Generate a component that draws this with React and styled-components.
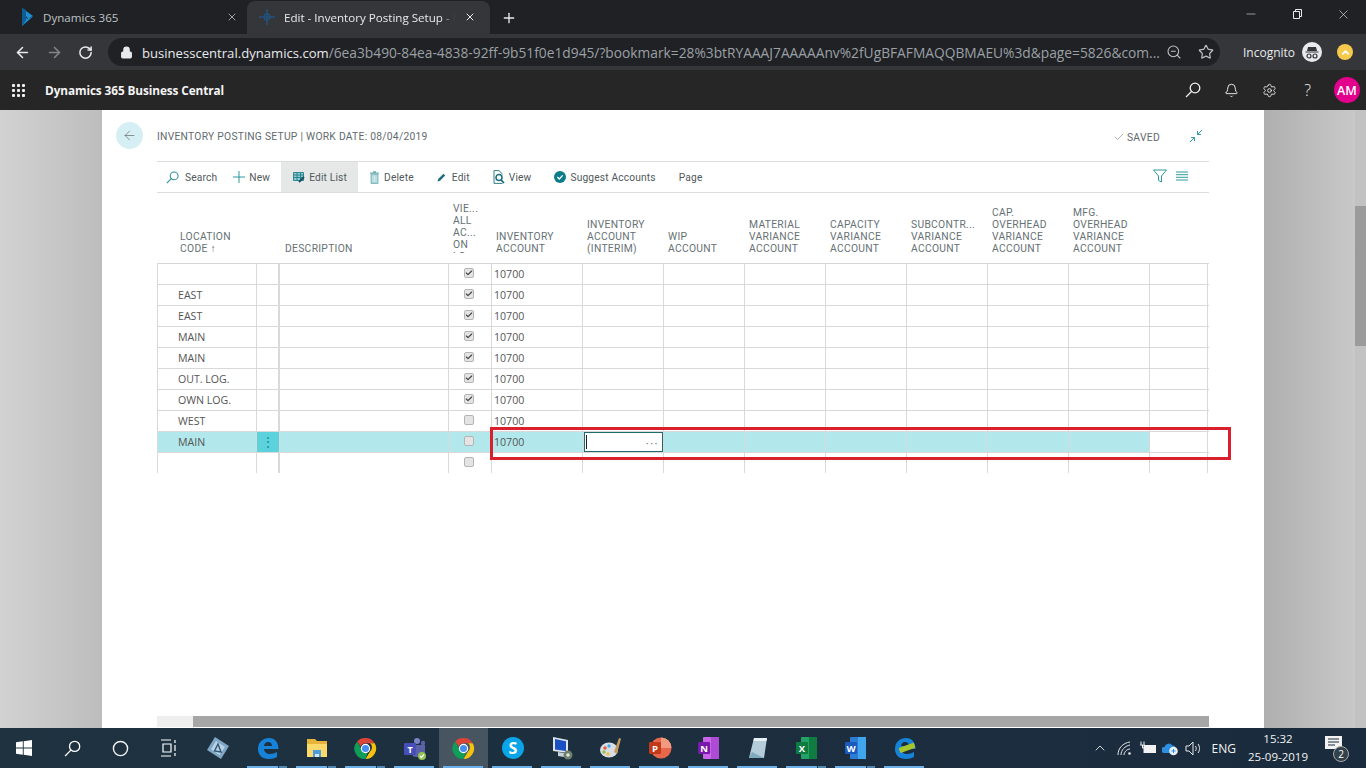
import React from 'react';
import styled, { createGlobalStyle } from 'styled-components';
import { ArrowLeft, ArrowRight, RotateCw, Lock, Star, ZoomOut, Bell, Settings, Plus, X, Minus, Check, ChevronUp, Circle } from 'lucide-react';

const Global = createGlobalStyle`
  html, body { margin: 0; padding: 0; width: 1366px; height: 768px; overflow: hidden; background: #fff; }
  * { box-sizing: border-box; }
  #root { width: 1366px; height: 768px; }
`;

const Screen = styled.div`
  width: 1366px; height: 768px; display: flex; flex-direction: column; overflow: hidden;
  font-family: "Open Sans", sans-serif;
`;

/* browser chrome */
const TabBar = styled.div`
  height: 34px; background: #202124; display: flex; align-items: flex-end; flex: none;
`;
const Tab = styled.div`
  width: ${p => p.$w}px; height: 33px; display: flex; align-items: center; padding: 0 ${p => p.$pr}px 1px ${p => p.$pl}px;
  background: ${p => p.$active ? '#35363a' : 'transparent'};
  border-radius: 8px 8px 0 0; color: ${p => p.$active ? '#e8eaed' : '#bdc1c6'};
  font-size: 11.6px; gap: 9px; flex: none;
`;
const TabText = styled.span`
  flex: 1; white-space: nowrap; overflow: hidden; min-width: 0;
  ${p => p.$fade ? 'mask-image: linear-gradient(90deg, #000 92%, transparent);' : ''}
`;
const NewTab = styled.div`
  margin-left: 11px; height: 33px; display: flex; align-items: center; color: #e8eaed;
`;
const WindowControls = styled.div`
  margin-left: auto; height: 34px; display: flex; align-items: flex-start; padding-top: 7px; color: #e8eaed; padding-right: 15px; gap: 32px;
`;
const AddressBar = styled.div`
  height: 36px; background: #35363a; display: flex; align-items: center; flex: none; padding-left: 14px; color: #e8eaed;
`;
const NavIcons = styled.div`
  display: flex; align-items: center; gap: 15px; width: 94px; flex: none;
`;
const Omnibox = styled.div`
  width: 1112px; height: 28px; border-radius: 14px; background: #202124; display: flex; align-items: center;
  padding: 0 6px 0 12px; gap: 9px; flex: none;
`;
const Url = styled.div`
  flex: none; width: 1022px; margin-right: -9px; font-size: 13.77px; white-space: nowrap; color: #9aa0a6; overflow: hidden;
  strong { font-weight: 400; color: #e8eaed; font-size: 13.1px; }
`;
const OmniIcons = styled.div`
  margin-left: auto; display: flex; align-items: center; gap: 16px; color: #bdc1c6;
`;
const Profile = styled.div`
  margin-left: 23px; display: flex; align-items: center; gap: 7px; font-size: 12px; color: #e8eaed;
`;
const Dot = styled.div`
  width: 16px; height: 16px; border-radius: 50%; background: #f6c84c; margin-left: 15px; display: flex; align-items: center; justify-content: center; color: #fff;
`;

/* app bar */
const AppBar = styled.div`
  height: 40px; background: #262626; display: flex; align-items: center; padding-left: 12px; flex: none; color: #fff;
`;
const Waffle = styled.div`
  display: grid; grid-template-columns: repeat(3, 3px); gap: 2px; margin-right: 20px;
`;
const WaffleDot = styled.span`
  width: 3px; height: 3px; background: #f0f0f0; border-radius: 1px;
`;
const AppTitle = styled.div`
  font-weight: 700; font-size: 11.8px; color: #f4f4f4; letter-spacing: -.1px;
`;
const AppActions = styled.div`
  margin-left: auto; display: flex; align-items: center; gap: 23px; padding-right: 6px; color: #f0f0f0;
`;
const Help = styled.span`
  font-size: 16px; width: 15px; text-align: center; font-weight: 300;
`;
const Avatar = styled.div`
  width: 26px; height: 26px; border-radius: 50%; background: #e3008c; color: #fff; font-size: 12.5px; font-weight: 600;
  display: flex; align-items: center; justify-content: center; margin-left: -4px;
`;

/* page area */
const Stage = styled.div`
  flex: 1; min-height: 0; display: flex;
`;
const LeftShade = styled.div`
  width: 102px; flex: none; background: linear-gradient(90deg, #d2d2d2, #bdbdbd);
`;
const RightShade = styled.div`
  width: 91px; flex: none; background: linear-gradient(90deg, #afafaf, #c8c8c8);
`;
const PageScroll = styled.div`
  width: 11px; flex: none; background: #c2c2c2; padding-top: 96px;
`;
const PageThumb = styled.div`
  height: 140px; background: #9b9b9b;
`;
const Panel = styled.div`
  width: 1162px; flex: none; background: #fff; display: flex; flex-direction: column; position: relative;
`;
const PageHead = styled.div`
  height: 51px; display: flex; align-items: center; padding: 0 61px 0 14px; flex: none;
`;
const BackButton = styled.div`
  width: 27px; height: 27px; border-radius: 50%; background: #d6eff4; color: #4d5b60; display: flex; align-items: center; justify-content: center; margin-right: 14px;
`;
const PageTitle = styled.div`
  font-family: Roboto, sans-serif; font-size: 10.3px; color: #5f6a6e; letter-spacing: .26px; white-space: nowrap; margin-top: 2px;
`;
const Saved = styled.div`
  margin-left: auto; display: flex; align-items: center; gap: 2px; font-family: Roboto, sans-serif; font-size: 10.3px; letter-spacing: .3px; color: #5f6a6e; margin-right: 29px; margin-top: 3px;
`;
const Teal = styled.span`
  color: #2f9aa0; display: inline-flex;
`;
const Body = styled.div`
  margin-left: 55px; width: 1052px; display: flex; flex-direction: column;
`;
const Toolbar = styled.div`
  height: 32px; border-top: 1px solid #dcdcdc; border-bottom: 1px solid #dcdcdc; display: flex; align-items: stretch;
  font-family: Roboto, sans-serif; font-size: 10.2px; letter-spacing: .17px; color: #50595c; flex: none;
`;
const ToolButton = styled.div`
  display: flex; align-items: center; gap: ${p => p.$gap ?? 4}px; padding: 0 ${p => p.$pr ?? 11}px 0 ${p => p.$pl ?? 12}px;
  background: ${p => p.$active ? '#e6e8e8' : 'transparent'}; white-space: nowrap;
`;
const ToolRight = styled.div`
  margin-left: auto; display: flex; align-items: center; gap: 9px; padding-right: 21px; padding-bottom: 3px;
`;
const gridCols = '100px 23px 169px 43px 91px repeat(7, 81px) 58px';
const HeaderRow = styled.div`
  height: 71px; display: grid; grid-template-columns: ${gridCols}; flex: none;
  border-bottom: 1px solid #d6d6d6;
`;
const HeaderCell = styled.div`
  display: flex; align-items: flex-end; padding: 0 0 8px ${p => p.$pl ?? 4}px; overflow: hidden;
`;
const HeaderLabel = styled.div`
  font-family: Roboto, sans-serif; font-size: 10.3px; line-height: 12px; letter-spacing: .3px; color: #667175; white-space: nowrap;
  ${p => p.$clip ? 'align-self: flex-start; margin-top: 10px; height: 50px; overflow: hidden;' : ''}
`;
const Row = styled.div`
  height: 21px; display: grid; grid-template-columns: ${gridCols}; flex: none;
  border-bottom: 1px solid ${p => p.$last ? 'transparent' : '#d9d9d9'};
`;
const Cell = styled.div`
  border-right: ${p => p.$thick ? 2 : 1}px solid #d9d9d9;
  ${p => p.$first ? 'border-left: 1px solid #d9d9d9;' : ''}
  background: ${p => p.$bg || 'transparent'};
  padding-left: ${p => p.$pl ?? 0}px; padding-right: ${p => p.$pr ?? 0}px; display: flex; align-items: center; justify-content: ${p => p.$center ? 'center' : 'flex-start'};
  font-size: 10.6px; color: #555; white-space: nowrap; min-width: 0;
`;
const Box = styled.div`
  width: 10px; height: 10px; border-radius: 2px; background: #e4e4e4; border: 1px solid #b4b4b4; display: flex; align-items: center; justify-content: center; color: #444; margin-bottom: 2px;
`;
const Kebab = styled.span`
  color: #1f8f99; font-size: 14px; line-height: 1;
`;
const Editor = styled.div`
  width: 79px; height: 20px; margin-left: 1px; background: #fff; border: 1px solid #1f6a70; display: flex; align-items: center; justify-content: space-between; padding: 0 3px 0 1px; color: #777; letter-spacing: 1.5px; font-size: 11px;
`;
const Caret = styled.span`
  width: 1px; height: 14px; background: #222;
`;
const Callout = styled.div`
  position: absolute; left: 388px; top: 317px; width: 741px; height: 33px; border: 3px solid #d9202c; pointer-events: none;
`;
const HScroll = styled.div`
  position: absolute; left: 55px; top: 606px; width: 1052px; height: 11px; background: #eeeeee; padding-left: 36px;
`;
const HThumb = styled.div`
  height: 11px; background: #a6a6a6;
`;

/* taskbar */
const Taskbar = styled.div`
  height: 40px; background: linear-gradient(90deg, #1e3240, #1a2b3d); display: flex; align-items: stretch; flex: none; color: #f2f2f2;
`;
const Slot = styled.div`
  width: ${p => p.$w ?? 49}px; flex: none; display: flex; align-items: center; justify-content: center; position: relative;
  background: ${p => p.$active ? '#46555f' : 'transparent'};
  ${p => p.$run ? `&::after { content: ''; position: absolute; left: 4px; right: 5px; bottom: 0; height: 2px;
    background: ${p.$stack ? 'linear-gradient(90deg, #6cb0ea 31px, transparent 31px, transparent 32px, #4f87b5 32px)' : '#6cb0ea'}; }` : ''}
`;
const Tray = styled.div`
  margin-left: auto; display: flex; align-items: center; padding-right: 24px; font-size: 12px;
`;
const TrayIcon = styled.div`
  width: ${p => p.$w}px; display: flex; justify-content: center;
`;
const Lang = styled.span`
  margin-left: 7px;
`;
const Clock = styled.div`
  width: 60px; text-align: center; line-height: 18px; font-size: 11.5px; margin-left: 12px; margin-right: 17px; white-space: nowrap;
`;
const Notify = styled.div`
  position: relative; width: 17px; height: 16px; margin-bottom: 8px; color: #f2f2f2;
`;
const NotifyBadge = styled.div`
  position: absolute; right: -7px; bottom: -10px; width: 16px; height: 16px; border-radius: 50%; background: #33414b; border: 1px solid #aaa;
  font-size: 10px; display: flex; align-items: center; justify-content: center; color: #fff;
`;

const ChromeLogo = ({ s = 22 }) => (
  <svg width={s} height={s} viewBox="0 0 24 24">
    <path d="M12 1a11 11 0 0 1 9.600 5.500H12a5.500 5.500 0 0 0-5.100 3.300L3.300 4.600A11 11 0 0 1 12 1z" fill="#dc4437" />
    <path d="M21.600 6.500A11 11 0 0 1 12 23l4.700-8a5.500 5.500 0 0 0 .1-8.500z" fill="#f4c20d" />
    <path d="M12 23A11 11 0 0 1 3.300 4.600l4.600 8.200a5.500 5.500 0 0 0 6.300 3.700z" fill="#0f9d58" />
    <circle cx="12" cy="12" r="4.300" fill="#4a8df0" stroke="#fff" strokeWidth="1.200" />
  </svg>
);
const EdgeLogo = ({ dev }) => (
  <svg width="24" height="24" viewBox="0 0 24 24">
    <path d="M2 13C2 6 7 2 13 2c6 0 9.500 4.500 9.500 11H8c.3 3.500 3 5 6 5 2.500 0 5-.8 7-2v5c-2 1.200-5 2-8 2-7 0-11-4-11-10zm6-3h8c0-2.500-1.500-4-4-4s-3.700 1.800-4 4z" fill="#1683d8" />
    {dev && <rect x="6" y="9.500" width="16" height="5.500" rx="1" transform="rotate(-20 13 12)" fill="#a8c62c" />}
  </svg>
);
const Folder = () => (
  <svg width="24" height="24" viewBox="0 0 24 24">
    <path d="M2 3h8l2 2h10v16H2z" fill="#e8b33a" /><path d="M2 8h20v13H2z" fill="#fbd96b" />
    <path d="M8 14h8v7H8z" fill="#4f9ad8" /><path d="M10 18h4v3h-4z" fill="#d9e7f2" />
  </svg>
);
const Teams = () => (
  <svg width="24" height="24" viewBox="0 0 24 24">
    <circle cx="14" cy="5" r="3" fill="#7b83c9" /><circle cx="20" cy="7" r="2.200" fill="#5b62a8" />
    <path d="M9 9h13v8a4 4 0 0 1-4 4h-5a4 4 0 0 1-4-4z" fill="#5b62a8" />
    <rect x="1" y="7" width="12" height="12" rx="1" fill="#464eb8" />
    <text x="7" y="16.500" textAnchor="middle" fontSize="9" fontWeight="700" fill="#fff" fontFamily="Open Sans">T</text>
    <circle cx="19" cy="20" r="4" fill="#92c353" /><path d="M17 20l1.500 1.500L21 18.500" stroke="#fff" strokeWidth="1.200" fill="none" />
  </svg>
);
const Skype = () => (
  <svg width="24" height="24" viewBox="0 0 24 24">
    <circle cx="12" cy="12" r="11" fill="#0aa5e8" />
    <text x="12" y="17.500" textAnchor="middle" fontSize="16" fontWeight="700" fill="#fff" fontFamily="Open Sans">S</text>
  </svg>
);
const Monitor = () => (
  <svg width="24" height="24" viewBox="0 0 24 24">
    <path d="M3 1l15 3v13L3 15z" fill="#dfe5ec" /><path d="M5 3l11 2.300v9.700L5 13.500z" fill="#1b4fc4" />
    <path d="M8 16l6 1v4l-6-1z" fill="#c9d1d9" /><circle cx="18" cy="19" r="4.500" fill="#6f7f6e" /><circle cx="18" cy="19" r="1.800" fill="#dfe8d9" />
  </svg>
);
const Paint = () => (
  <svg width="24" height="24" viewBox="0 0 24 24">
    <ellipse cx="10" cy="14" rx="9" ry="7.500" fill="#d7dde3" /><circle cx="6" cy="12" r="1.700" fill="#e9573f" /><circle cx="10" cy="10" r="1.700" fill="#3fb0e9" /><circle cx="5" cy="16" r="1.700" fill="#8cc152" /><circle cx="9" cy="18" r="1.700" fill="#f6bb42" />
    <path d="M15 16l5-14 2 .8-4 15z" fill="#c79a5b" />
  </svg>
);
const Office = ({ l, a, b, c }) => (
  <svg width="24" height="24" viewBox="0 0 24 24">
    <rect x="6" y="1" width="16" height="22" rx="1" fill={b} /><rect x="14" y="1" width="8" height="22" fill={c} />
    <rect x="1" y="6" width="12" height="12" rx="1" fill={a} />
    <text x="7" y="15.500" textAnchor="middle" fontSize="9.500" fontWeight="700" fill="#fff" fontFamily="Open Sans">{l}</text>
  </svg>
);
const PowerPoint = () => (
  <svg width="24" height="24" viewBox="0 0 24 24">
    <circle cx="13" cy="12" r="10.500" fill="#e8674a" /><path d="M13 1.500A10.500 10.500 0 0 1 23.500 12H13z" fill="#f19a7f" />
    <rect x="1" y="6" width="12" height="12" rx="1" fill="#c13a1a" />
    <text x="7" y="15.500" textAnchor="middle" fontSize="9.500" fontWeight="700" fill="#fff" fontFamily="Open Sans">P</text>
  </svg>
);
const Notepad = () => (
  <svg width="24" height="24" viewBox="0 0 24 24">
    <path d="M8 2h13l-3 20H3z" fill="#b4cdd8" /><path d="M6 16l12 6H3z" fill="#7fa9bd" /><path d="M8 2h13l-.6 3H7.500z" fill="#e6f1f5" />
  </svg>
);
const Diamond = () => (
  <svg width="24" height="24" viewBox="0 0 24 24">
    <path d="M9 1l14 9-8 13L1 14z" fill="#7fa6c4" /><path d="M10 5l9 6-5.500 8L5 13.500z" fill="#b9d3e4" /><path d="M8.500 15l3.500-7 3 8z" fill="none" stroke="#34597a" strokeWidth="1.500" />
  </svg>
);
const WindowsLogo = () => (
  <svg width="16" height="16" viewBox="0 0 16 16" fill="#fff">
    <path d="M0 2.300L6.800 1.300V7.500H0zM7.700 1.200L16 0V7.500H7.700zM0 8.400H6.800V14.700L0 13.700zM7.700 8.400H16V16L7.700 14.800z" />
  </svg>
);
const TaskView = () => (
  <svg width="17" height="18" viewBox="0 0 17 18" fill="none" stroke="#fff" strokeWidth="1.200">
    <path d="M1 1h10M1 17h10M3 5h8v8H3zM15 1v3M15 6v6M15 14v3" />
  </svg>
);
const DynamicsLogo = () => (
  <svg width="13" height="18" viewBox="0 0 13 18">
    <path d="M1 0l11 8-5 2.500L4 7l2 4 6-2.500L1 18z" fill="#1c8ed1" /><path d="M1 0l4 2v10l-4 6z" fill="#0f5b94" />
  </svg>
);
const BcLogo = () => (
  <svg width="16" height="16" viewBox="0 0 16 16" fill="none" stroke="#23527f" strokeWidth="1.400">
    <path d="M8 0v16M0 8h16" /><circle cx="8" cy="8" r="3" />
  </svg>
);
const IncognitoIcon = () => (
  <svg width="20" height="20" viewBox="0 0 20 20">
    <circle cx="10" cy="10" r="10" fill="#e8eaed" />
    <path d="M6 5h8l1 4H5zM3.500 9.500h13v1h-13z" fill="#35363a" />
    <circle cx="7" cy="14" r="2" fill="none" stroke="#35363a" strokeWidth="1.200" /><circle cx="13" cy="14" r="2" fill="none" stroke="#35363a" strokeWidth="1.200" />
  </svg>
);
const SearchGlass = ({ s, c, w = 1.3 }) => (
  <svg width={s} height={s} viewBox="0 0 16 16" fill="none" stroke={c} strokeWidth={w}><circle cx="10" cy="6" r="4.800" /><path d="M6.500 9.500L1 15" /></svg>
);
const CollapseIcon = () => (
  <svg width="14" height="14" viewBox="0 0 14 14" fill="none" stroke="#2f9aa0" strokeWidth="1">
    <path d="M13 1L8.500 5.500M8.500 2v3.500H12M1 13l4.500-4.500M5.500 12V8.500H2" />
  </svg>
);
const PlusThin = () => (
  <svg width="12" height="12" viewBox="0 0 12 12" stroke="#2f9aa0" strokeWidth="1"><path d="M6 0v12M0 6h12" /></svg>
);
const EditListIcon = () => (
  <svg width="12" height="12" viewBox="0 0 12 12" fill="#8fc9cf" stroke="#1f7f8a" strokeWidth=".9">
    <path d="M.5 1.500h10v8h-10z" /><path d="M.5 4h10M.5 6.500h10M4 1.500v8M7.500 1.500v8" fill="none" /><path d="M6 11l5-5" stroke="#174f60" strokeWidth="1.800" />
  </svg>
);
const TrashIcon = () => (
  <svg width="9" height="13" viewBox="0 0 9 13">
    <path d="M0 1.500h9v1.200H0zM3 .3h3v1.200H3z" fill="#6fb0b6" />
    <path d="M1 3h7v9.500H1z" fill="#a9d2d6" stroke="#6fb0b6" strokeWidth=".8" /><path d="M3 4.500v6.500M4.500 4.500v6.500M6 4.500v6.500" stroke="#fff" strokeWidth=".5" />
  </svg>
);
const PencilIcon = () => (
  <svg width="9" height="9" viewBox="0 0 9 9"><path d="M.5 8.500l.7-2.500L6.500.8 8.200 2.500 3 7.800z" fill="#1c6f7c" /></svg>
);
const ViewIcon = () => (
  <svg width="12" height="14" viewBox="0 0 12 14" fill="none" stroke="#1c6f7c" strokeWidth="1.100">
    <path d="M6 .6H1v12.800h8.500" strokeWidth=".9" /><path d="M6 .6L9.500 4" strokeWidth=".9" />
    <circle cx="6" cy="7.500" r="3" strokeWidth="1.500" /><path d="M8 9.800L11 13" strokeWidth="1.700" />
  </svg>
);
const SuggestIcon = () => (
  <svg width="12" height="12" viewBox="0 0 12 12"><circle cx="6" cy="6" r="6" fill="#0f7c8a" /><path d="M3.300 6l2 2 3.400-3.600" stroke="#fff" strokeWidth="1.300" fill="none" /></svg>
);
const FilterIcon = () => (
  <svg width="14" height="14" viewBox="0 0 14 14" fill="none" stroke="#2f9aa0" strokeWidth="1"><path d="M.5 1h13L8.500 7v6l-3-1.500V7z" /></svg>
);
const RowsIcon = () => (
  <svg width="12" height="10" viewBox="0 0 12 10" stroke="#2f9aa0" strokeWidth="1"><path d="M0 1h12M0 3.700h12M0 6.300h12M0 9h12" /></svg>
);
const WifiIcon = () => (
  <svg width="15" height="15" viewBox="0 0 15 15" fill="none" stroke="#e8e8e8" strokeWidth="1"><path d="M1 14C1 7 6 2 13 1M4 14c0-5 4-9 9-10M7 14c0-3 3-6 6-6" /><circle cx="12.500" cy="12.500" r="1.300" fill="#e8e8e8" stroke="none" /></svg>
);
const VolumeIcon = () => (
  <svg width="17" height="15" viewBox="0 0 17 15" fill="none" stroke="#e8e8e8" strokeWidth="1"><path d="M1 5h3l4-4v13l-4-4H1zM10.500 5c1 1.500 1 3.500 0 5M13 3c2 2.500 2 6.500 0 9" /></svg>
);
const BatteryIcon = () => (
  <svg width="16" height="14" viewBox="0 0 16 14" fill="none" stroke="#f2f2f2"><rect x="4" y="4.500" width="11.500" height="7" fill="#f2f2f2" /><path d="M1 .5v3M4 .5v3M0 4h5M2.500 4v3h2" /></svg>
);
const OneDriveIcon = () => (
  <svg width="17" height="15" viewBox="0 0 17 15"><path d="M2 12a3 3 0 0 1 .500-6 4.500 4.500 0 0 1 8-1.500 3 3 0 0 1 3 4l-3 3.500z" fill="#2e8fe0" /><circle cx="11.500" cy="10" r="4.300" fill="#e8f0f6" /><path d="M9.500 10h4M11.500 8v4" stroke="#2e8fe0" /></svg>
);
const NotifyIcon = () => (
  <svg width="17" height="16" viewBox="0 0 17 16"><path d="M0 0h17v13H0z" fill="#f2f2f2" /><path d="M3 3h11M3 6h11M3 9h7" stroke="#1b2c39" /></svg>
);
const BoxCheck = ({ on }) => (
  <Box>{on && <Check size={8} strokeWidth={3.5} />}</Box>
);

const headers = [
  { pl: 23, lines: ['LOCATION', 'CODE ↑'] },
  { lines: [] },
  { pl: 5, lines: ['DESCRIPTION'] },
  { clip: true, lines: ['VIE...', 'ALL', 'AC...', 'ON', 'LO'] },
  { lines: ['INVENTORY', 'ACCOUNT'] },
  { lines: ['INVENTORY', 'ACCOUNT', '(INTERIM)'] },
  { lines: ['WIP', 'ACCOUNT'] },
  { lines: ['MATERIAL', 'VARIANCE', 'ACCOUNT'] },
  { lines: ['CAPACITY', 'VARIANCE', 'ACCOUNT'] },
  { lines: ['SUBCONTR...', 'VARIANCE', 'ACCOUNT'] },
  { lines: ['CAP.', 'OVERHEAD', 'VARIANCE', 'ACCOUNT'] },
  { lines: ['MFG.', 'OVERHEAD', 'VARIANCE', 'ACCOUNT'] },
  { lines: [] },
];
const rows = [
  { code: '', on: true, acc: '10700' },
  { code: 'EAST', on: true, acc: '10700' },
  { code: 'EAST', on: true, acc: '10700' },
  { code: 'MAIN', on: true, acc: '10700' },
  { code: 'MAIN', on: true, acc: '10700' },
  { code: 'OUT. LOG.', on: true, acc: '10700' },
  { code: 'OWN LOG.', on: true, acc: '10700' },
  { code: 'WEST', on: false, acc: '10700' },
  { code: 'MAIN', on: false, acc: '10700', selected: true },
  { code: '', on: false, acc: '' },
];

const tools = [
  { label: 'New', icon: <PlusThin /> },
  { label: 'Edit List', icon: <EditListIcon />, active: true },
  { label: 'Delete', icon: <TrashIcon />, gap: 5 },
  { label: 'Edit', icon: <PencilIcon />, gap: 6 },
  { label: 'View', icon: <ViewIcon /> },
  { label: 'Suggest Accounts', icon: <SuggestIcon /> },
  { label: 'Page' },
];

const taskIcons = [
  { el: <Diamond />, w: 50 },
  { el: <EdgeLogo />, run: true, stack: true },
  { el: <Folder />, run: true, stack: true },
  { el: <ChromeLogo s={23} />, run: true, stack: true },
  { el: <Teams />, run: true },
  { el: <ChromeLogo s={23} />, run: true, active: true },
  { el: <Skype />, run: true },
  { el: <Monitor />, run: true },
  { el: <Paint />, run: true },
  { el: <PowerPoint />, run: true },
  { el: <Office l="N" a="#7719aa" b="#ca64ea" c="#ae4bd5" />, run: true },
  { el: <Notepad />, run: true },
  { el: <Office l="X" a="#0f7b41" b="#21a366" c="#107c41" />, run: true, stack: true },
  { el: <Office l="W" a="#185abd" b="#2b7cd3" c="#41a5ee" />, run: true, stack: true },
  { el: <EdgeLogo dev />, run: true },
];

export default function App() {
  return (
    <Screen>
      <Global />
      <TabBar>
        <Tab $w={247} $pl={21} $pr={9}>
          <DynamicsLogo />
          <TabText>Dynamics 365</TabText>
          <X size={12} color="#9aa0a6" />
        </Tab>
        <Tab $w={243} $pl={12} $pr={14} $active>
          <BcLogo />
          <TabText $fade>Edit - Inventory Posting Setup - D</TabText>
          <X size={12} color="#e8eaed" />
        </Tab>
        <NewTab><Plus size={16} strokeWidth={2} /></NewTab>
        <WindowControls>
          <Minus size={14} strokeWidth={1} />
          <svg width="14" height="14" viewBox="0 0 14 14" fill="none" stroke="#e8eaed"><path d="M3.500 4.500h6v7h-6zM5.500 4.500v-2h6v7h-2" /></svg>
          <X size={15} strokeWidth={1} />
        </WindowControls>
      </TabBar>
      <AddressBar>
        <NavIcons>
          <ArrowLeft size={17} strokeWidth={2.2} />
          <ArrowRight size={17} strokeWidth={2.2} color="#80868b" />
          <RotateCw size={15} strokeWidth={2.4} />
        </NavIcons>
        <Omnibox>
          <Lock size={13} fill="#e8eaed" color="#e8eaed" />
          <Url><strong>businesscentral.dynamics.com</strong>/6ea3b490-84ea-4838-92ff-9b51f0e1d945/?bookmark=28%3btRYAAAJ7AAAAAnv%2fUgBFAFMAQQBMAEU%3d&amp;page=5826&amp;com...</Url>
          <OmniIcons>
            <ZoomOut size={16} strokeWidth={1.6} />
            <Star size={16} strokeWidth={1.8} />
          </OmniIcons>
        </Omnibox>
        <Profile>
          <span>Incognito</span>
          <IncognitoIcon />
        </Profile>
        <Dot><ChevronUp size={11} strokeWidth={4} /></Dot>
      </AddressBar>
      <AppBar>
        <Waffle>{Array.from({ length: 9 }, (_, i) => <WaffleDot key={i} />)}</Waffle>
        <AppTitle>Dynamics 365 Business Central</AppTitle>
        <AppActions>
          <SearchGlass s={16} c="#f0f0f0" />
          <Bell size={15} strokeWidth={1.5} />
          <Settings size={15} strokeWidth={1.4} />
          <Help>?</Help>
          <Avatar>AM</Avatar>
        </AppActions>
      </AppBar>
      <Stage>
        <LeftShade />
        <Panel>
          <PageHead>
            <BackButton><ArrowLeft size={15} strokeWidth={1} /></BackButton>
            <PageTitle>INVENTORY POSTING SETUP | WORK DATE: 08/04/2019</PageTitle>
            <Saved><Check size={12} strokeWidth={1} /> SAVED</Saved>
            <Teal><CollapseIcon /></Teal>
          </PageHead>
          <Body>
            <Toolbar>
              <ToolButton $pl={9} $pr={4} $gap={6}>
                <SearchGlass s={13} c="#2f8f96" />
                Search
              </ToolButton>
              {tools.map(t => (
                <ToolButton key={t.label} $active={t.active} $gap={t.gap}>{t.icon}{t.label}</ToolButton>
              ))}
              <ToolRight>
                <FilterIcon />
                <RowsIcon />
              </ToolRight>
            </Toolbar>
            <HeaderRow>
              {headers.map((h, i) => (
                <HeaderCell key={i} $pl={h.pl}>
                  <HeaderLabel $clip={h.clip}>{h.lines.map(l => <div key={l}>{l}</div>)}</HeaderLabel>
                </HeaderCell>
              ))}
            </HeaderRow>
            {rows.map((r, ri) => {
              const bg = r.selected ? '#b2e8ec' : undefined;
              return (
                <Row key={ri} $last={ri === rows.length - 1}>
                  <Cell $first $pl={20} $bg={bg}>{r.code}</Cell>
                  <Cell $center $thick={!r.selected} $bg={r.selected ? '#5cd2dc' : undefined}>{r.selected && <Kebab>⋮</Kebab>}</Cell>
                  <Cell $bg={bg} />
                  <Cell $center $pr={2} $bg={bg}><BoxCheck on={r.on} /></Cell>
                  <Cell $pl={2} $bg={bg}>{r.acc}</Cell>
                  <Cell $bg={bg}>{r.selected && <Editor><Caret /><span>···</span></Editor>}</Cell>
                  {Array.from({ length: 6 }, (_, i) => <Cell key={i} $bg={bg} />)}
                  <Cell />
                </Row>
              );
            })}
          </Body>
          <HScroll><HThumb /></HScroll>
          <Callout />
        </Panel>
        <RightShade />
        <PageScroll><PageThumb /></PageScroll>
      </Stage>
      <Taskbar>
        <Slot $w={48}><WindowsLogo /></Slot>
        <Slot $w={48}><SearchGlass s={17} c="#fff" w={1.2} /></Slot>
        <Slot $w={48}><Circle size={17} strokeWidth={2} /></Slot>
        <Slot $w={49}><TaskView /></Slot>
        {taskIcons.map((t, i) => (
          <Slot key={i} $w={t.w} $run={t.run} $active={t.active} $stack={t.stack}>{t.el}</Slot>
        ))}
        <Tray>
          <TrayIcon $w={26}><ChevronUp size={16} strokeWidth={1.3} /></TrayIcon>
          <TrayIcon $w={24}><WifiIcon /></TrayIcon>
          <TrayIcon $w={22}><BatteryIcon /></TrayIcon>
          <TrayIcon $w={24}><OneDriveIcon /></TrayIcon>
          <TrayIcon $w={22}><VolumeIcon /></TrayIcon>
          <Lang>ENG</Lang>
          <Clock>15:32<br />25-09-2019</Clock>
          <Notify>
            <NotifyIcon />
            <NotifyBadge>2</NotifyBadge>
          </Notify>
        </Tray>
      </Taskbar>
    </Screen>
  );
}
